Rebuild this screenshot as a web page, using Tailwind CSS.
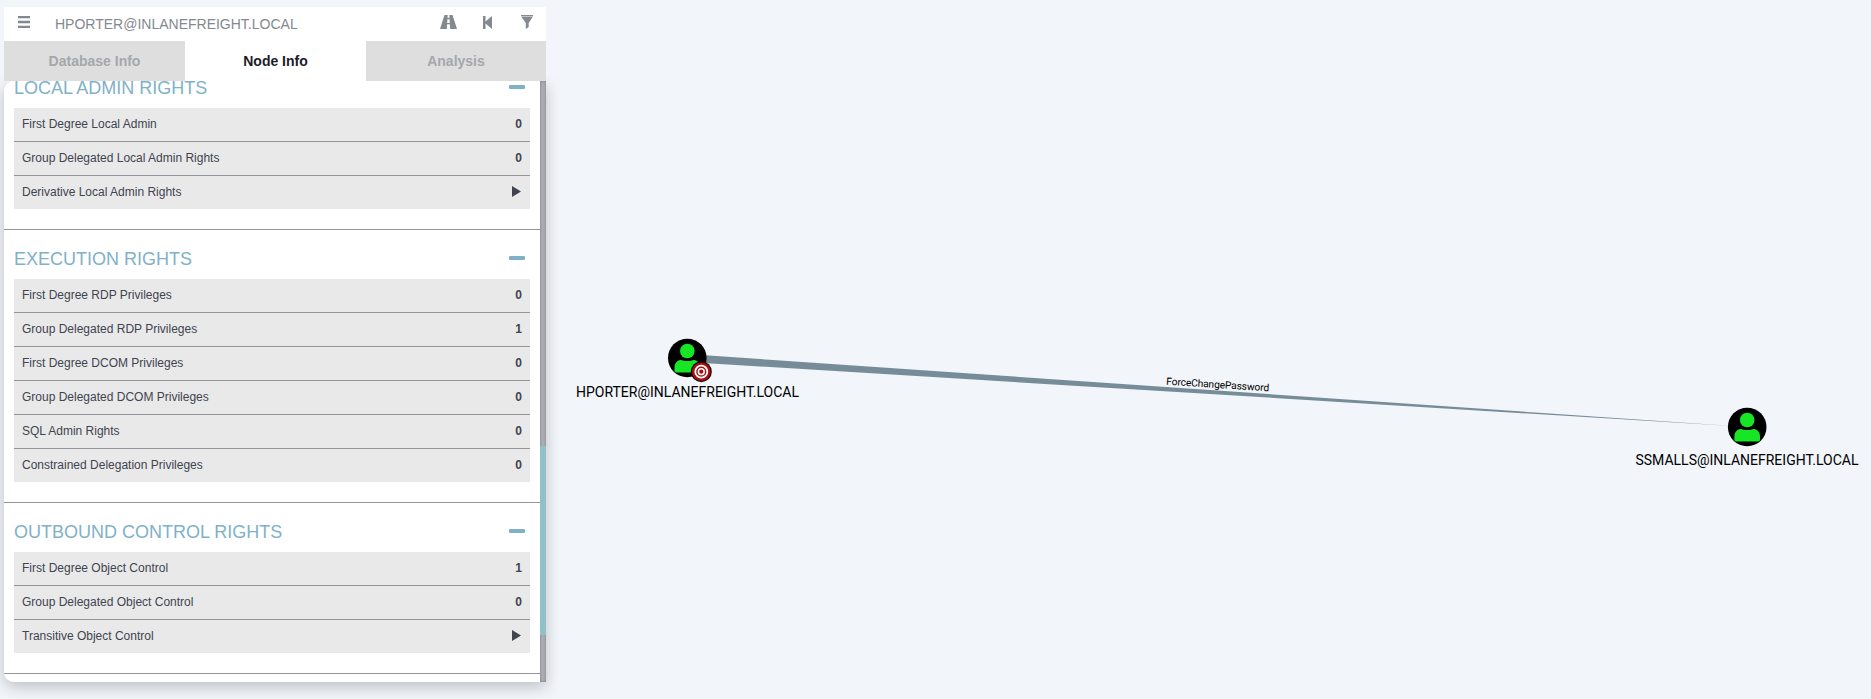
<!DOCTYPE html>
<html lang="en">
<head>
<meta charset="utf-8">
<title>BloodHound</title>
<script src="https://cdn.jsdelivr.net/npm/@tailwindcss/browser@4"></script>
</head>
<body class="relative h-[699px] w-[1871px] overflow-hidden bg-[#f2f5fa] font-['Liberation_Sans',sans-serif]">

<svg class="absolute inset-0" width="1871" height="699" viewBox="0 0 1871 699" font-family="Roboto, sans-serif">
  <defs>
    <g id="user">
      <circle r="19.3" fill="#000"/>
      <circle cy="-7" r="7.3" fill="#17e625"/>
      <path d="M-12.8 12.8V9.5C-12.8 4.5-9.5 2-6 2C-3 3.3 3 3.3 6 2C9.5 2 12.8 4.5 12.8 9.5V12.8Q12.8 14.6 11 14.6H-11Q-12.8 14.6-12.8 12.8Z" fill="#17e625"/>
    </g>
  </defs>
  <path d="M687 354L1736 426.3L687 362Z" fill="#768c98"/>
  <text transform="translate(1217.5 388) rotate(3.7)" text-anchor="middle" font-size="10.2" textLength="103">ForceChangePassword</text>
  <use href="#user" x="687.3" y="358"/>
  <g transform="translate(701.3 371.7)">
    <circle r="10.5" fill="#1c0303"/>
    <circle r="9.3" fill="#a80f12"/>
    <circle r="6" fill="none" stroke="#fff" stroke-width="1.8"/>
    <circle r="2.9" fill="none" stroke="#fff" stroke-width="1.5"/>
  </g>
  <use href="#user" x="1747.2" y="427"/>
  <text x="687.5" y="397.4" text-anchor="middle" font-size="14" textLength="223">HPORTER@INLANEFREIGHT.LOCAL</text>
  <text x="1747" y="465.4" text-anchor="middle" font-size="14" textLength="223">SSMALLS@INLANEFREIGHT.LOCAL</text>
</svg>

<aside class="relative ml-1 w-[542px] pt-[7px]">
  <header class="relative z-10 flex h-[34px] items-center bg-white text-[14px] text-[#84888f]">
    <svg class="mb-[4px] ml-[14px]" width="12" height="12" fill="#84888f"><path d="M0 0h12v2.3H0zM0 4.8h12v2.4H0zM0 9.7h12v2.3H0z"/></svg>
    <span class="ml-[25px] flex-1">HPORTER@INLANEFREIGHT.LOCAL</span>
    <svg class="mr-[26px] mb-[4px]" width="17" height="14" viewBox="0 0 17 15" preserveAspectRatio="none" fill="#84888f"><path d="M4.5 0H7.7L7.5 3H9.5L9.3 0H12.5L17 15H10.2L9.9 10H7.1L6.8 15H0ZM7.4 4.5L7.2 8.5H9.8L9.6 4.5Z"/></svg>
    <svg class="mr-[29px] mb-[3px]" width="9" height="13" fill="#84888f"><path d="M0 0H2.5V5.5L9 0V13L2.5 7.5V13H0Z"/></svg>
    <svg class="mr-[13px] mb-[4px]" width="12" height="14" fill="#84888f"><path d="M0 0H12V1.2H0ZM.3 1.8H11.7L7.7 8V12L4.8 14V8Z"/></svg>
  </header>
  <nav class="relative z-10 grid h-10 grid-cols-[181px_181px_180px] bg-white text-center text-[14px]/[40px] font-bold">
    <span class="bg-[#dedede] text-[#a5a7ab]">Database Info</span>
    <span class="text-[#1b1c28]">Node Info</span>
    <span class="bg-[#dedede] text-[#a5a7ab]">Analysis</span>
  </nav>

  <div class="flex h-[601px] rounded-l-[10px] bg-white text-[12px] text-[#3f4450] shadow-[0_5px_15px_rgba(0,0,0,0.22)]">
    <main class="h-[601px] w-[536px] overflow-hidden rounded-l-[10px] bg-white">
      <section class="border-b border-[#949599] pb-5">
        <div class="flex h-[27px] items-end justify-between pr-[15px] pl-[10px] text-[18px] text-[#7fb1c8]"><h2 class="mb-[10px] h-[17px] leading-[14px]">LOCAL ADMIN RIGHTS</h2><i class="mb-[19px] h-1 w-4 rounded-[1px] bg-[#7fb1c8]"></i></div>
        <ul class="mr-[6px] ml-[10px] w-[516px] divide-y divide-[#949599] bg-[#e9e9e9]">
          <li class="flex h-[34px] items-center justify-between px-2 pb-[2px]">First Degree Local Admin<b>0</b></li>
          <li class="flex h-[34px] items-center justify-between px-2 pb-[2px]">Group Delegated Local Admin Rights<b>0</b></li>
          <li class="flex h-[33px] items-center justify-between px-2 pb-[2px]">Derivative Local Admin Rights<svg class="mr-[1px]" width="9" height="11" fill="#3f4450"><path d="M0 0L9 5.5L0 11Z"/></svg></li>
        </ul>
      </section>
      <section class="border-b border-[#949599] pb-5">
        <div class="flex h-[49px] items-center justify-between pr-[15px] pl-[10px] text-[18px] text-[#7fb1c8]"><h2 class="pt-[9px]">EXECUTION RIGHTS</h2><i class="mt-[7px] h-1 w-4 rounded-[1px] bg-[#7fb1c8]"></i></div>
        <ul class="mr-[6px] ml-[10px] w-[516px] divide-y divide-[#949599] bg-[#e9e9e9]">
          <li class="flex h-[34px] items-center justify-between px-2 pb-[2px]">First Degree RDP Privileges<b>0</b></li>
          <li class="flex h-[34px] items-center justify-between px-2 pb-[2px]">Group Delegated RDP Privileges<b>1</b></li>
          <li class="flex h-[34px] items-center justify-between px-2 pb-[2px]">First Degree DCOM Privileges<b>0</b></li>
          <li class="flex h-[34px] items-center justify-between px-2 pb-[2px]">Group Delegated DCOM Privileges<b>0</b></li>
          <li class="flex h-[34px] items-center justify-between px-2 pb-[2px]">SQL Admin Rights<b>0</b></li>
          <li class="flex h-[33px] items-center justify-between px-2 pb-[2px]">Constrained Delegation Privileges<b>0</b></li>
        </ul>
      </section>
      <section class="border-b border-[#949599] pb-5">
        <div class="flex h-[49px] items-center justify-between pr-[15px] pl-[10px] text-[18px] text-[#7fb1c8]"><h2 class="pt-[9px]">OUTBOUND CONTROL RIGHTS</h2><i class="mt-[7px] h-1 w-4 rounded-[1px] bg-[#7fb1c8]"></i></div>
        <ul class="mr-[6px] ml-[10px] w-[516px] divide-y divide-[#949599] bg-[#e9e9e9]">
          <li class="flex h-[34px] items-center justify-between px-2 pb-[2px]">First Degree Object Control<b>1</b></li>
          <li class="flex h-[34px] items-center justify-between px-2 pb-[2px]">Group Delegated Object Control<b>0</b></li>
          <li class="flex h-[33px] items-center justify-between px-2 pb-[2px]">Transitive Object Control<svg class="mr-[1px]" width="9" height="11" fill="#3f4450"><path d="M0 0L9 5.5L0 11Z"/></svg></li>
        </ul>
      </section>
    </main>
    <div class="h-[601px] w-[6px] bg-[#acaeb3] pt-[365px] shadow-[inset_0_0_3px_rgba(0,0,0,0.3)]">
      <div class="h-[189px] bg-[#90c1c7]"></div>
    </div>
  </div>
</aside>
</body>
</html>
